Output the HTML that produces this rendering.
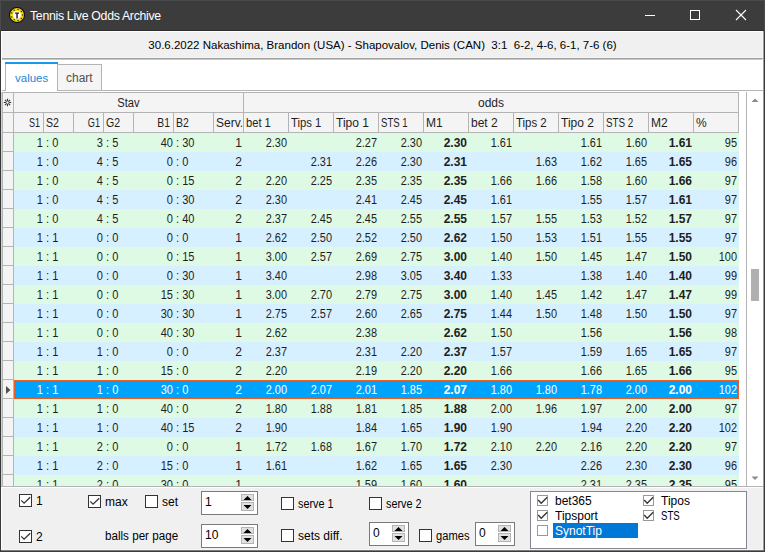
<!DOCTYPE html><html><head><meta charset="utf-8"><style>
*{margin:0;padding:0;box-sizing:border-box}
html,body{width:765px;height:552px;overflow:hidden;background:#f0f0f0;font-family:"Liberation Sans",sans-serif;font-size:12px;color:#000}
.ab{position:absolute}
.t{position:absolute;white-space:pre;line-height:21px;height:21px}
.r{text-align:right}
.c{text-align:center}
.b{font-weight:bold}
.cb{position:absolute;width:13px;height:13px;border:1px solid #333;background:#fff}
.cb2{position:absolute;width:11px;height:11px;border:1px solid #999;background:#fff}
.ln{position:absolute;background:#b4b4b4}
</style></head><body>
<div class="ab" style="left:0;top:0;width:765px;height:30px;background:#3c3c3c"></div>
<div class="ab" style="left:0;top:30px;width:765px;height:1px;background:#2c2c2c"></div>
<svg class="ab" style="left:8px;top:6px" width="18" height="18" viewBox="0 0 18 18">
<circle cx="9" cy="9" r="8" fill="#0d0d0d"/>
<circle cx="9" cy="9" r="7" fill="#e8c800"/>
<circle cx="9" cy="9" r="6.2" fill="#f5dc10"/>
<circle cx="14.60" cy="9.00" r="0.75" fill="#3a3000"/><circle cx="13.29" cy="12.60" r="0.75" fill="#3a3000"/><circle cx="9.97" cy="14.51" r="0.75" fill="#3a3000"/><circle cx="6.20" cy="13.85" r="0.75" fill="#3a3000"/><circle cx="3.74" cy="10.92" r="0.75" fill="#3a3000"/><circle cx="3.74" cy="7.08" r="0.75" fill="#3a3000"/><circle cx="6.20" cy="4.15" r="0.75" fill="#3a3000"/><circle cx="9.97" cy="3.49" r="0.75" fill="#3a3000"/><circle cx="13.29" cy="5.40" r="0.75" fill="#3a3000"/>
<circle cx="9" cy="9" r="3.9" fill="#fff"/>
<path d="M7 6.4h4v1.4h-1.2v4.7h-1.5v-4.7h-1.3z" fill="#222"/>
</svg>
<div class="t" style="left:30px;top:6px;color:#fff;font-size:12.3px;letter-spacing:-0.3px">Tennis Live Odds Archive</div>
<div class="ab" style="left:645px;top:15px;width:10px;height:1px;background:#fff"></div>
<div class="ab" style="left:690px;top:10px;width:10px;height:10px;border:1px solid #fff"></div>
<svg class="ab" style="left:735px;top:9px" width="12" height="12" viewBox="0 0 12 12"><path d="M1 1L11 11M11 1L1 11" stroke="#fff" stroke-width="1.1"/></svg>
<div class="ab" style="left:0;top:0;width:1px;height:552px;background:#383838"></div>
<div class="ab" style="left:764px;top:0;width:1px;height:552px;background:#3c3c3c"></div>
<div class="ab" style="left:0;top:0;width:765px;height:1px;background:#4b4b4b"></div>
<div class="ab" style="left:0;top:0;width:1px;height:31px;background:#4b4b4b"></div>
<div class="ab" style="left:764px;top:0;width:1px;height:31px;background:#4b4b4b"></div>
<div class="ab" style="left:2px;top:549px;width:760px;height:1px;background:#f6f6f6"></div>
<div class="ab" style="left:763px;top:31px;width:1px;height:521px;background:#9a9a9a"></div>
<div class="ab" style="left:0;top:551px;width:765px;height:1px;background:#3c3c3c"></div>
<div class="ab" style="left:1px;top:550px;width:763px;height:1px;background:#7a7a7a"></div>
<div class="ab" style="left:1px;top:31px;width:762px;height:1px;background:#fff"></div>
<div class="ab" style="left:1px;top:31px;width:1px;height:519px;background:#fff"></div>
<div class="ab" style="left:762px;top:31px;width:1px;height:519px;background:#f8f8f8"></div>
<div class="ab" style="left:2px;top:57px;width:760px;height:1px;background:#f6f6f6"></div>
<div class="ab" style="left:2px;top:58px;width:762px;height:1px;background:#a0a0a0"></div>
<div class="t c" style="left:2px;top:35px;width:761px;color:#000;font-size:11.5px">30.6.2022 Nakashima, Brandon (USA) - Shapovalov, Denis (CAN)  3:1  6-2, 4-6, 6-1, 7-6 (6)</div>
<div class="ab" style="left:2px;top:59px;width:761px;height:428px;background:#fff"></div>
<div class="ab" style="left:2px;top:59px;width:760px;height:1px;background:#c8c8c8"></div>
<div class="ln" style="left:2px;top:90px;width:4px;height:1px"></div>
<div class="ln" style="left:101px;top:90px;width:662px;height:1px"></div>
<div class="ab" style="left:5px;top:62px;width:53px;height:2px;background:#1a98f0"></div>
<div class="ln" style="left:5px;top:64px;width:1px;height:27px"></div>
<div class="t" style="left:15px;top:68px;color:#1a86d6;font-size:11.5px">values</div>
<div class="ab" style="left:57px;top:64px;width:45px;height:27px;border:1px solid #b4b4b4;background:#f5f5f5"></div>
<div class="t" style="left:66px;top:68px;color:#505050">chart</div>
<div class="ab" style="left:2px;top:92px;width:12px;height:21px;background:#b4b4b4"></div>
<div class="ab" style="left:3px;top:93px;width:10px;height:19px;background:#f4f4f4"></div>
<div class="ab" style="left:2px;top:112px;width:12px;height:21px;background:#b4b4b4"></div>
<div class="ab" style="left:3px;top:113px;width:10px;height:19px;background:#f4f4f4"></div>
<svg class="ab" style="left:3px;top:98px" width="9" height="9" viewBox="0 0 9 9"><g stroke="#333" stroke-width="1.1"><path d="M4.5 0.8V8.2M0.8 4.5H8.2M1.9 1.9L7.1 7.1M7.1 1.9L1.9 7.1"/></g><circle cx="4.5" cy="4.5" r="1.2" fill="#f4f4f4"/></svg>
<div class="ab" style="left:13px;top:92px;width:231px;height:21px;background:#b4b4b4"></div>
<div class="ab" style="left:14px;top:93px;width:229px;height:19px;background:#f4f4f4"></div>
<div class="ab" style="left:243px;top:92px;width:496px;height:21px;background:#b4b4b4"></div>
<div class="ab" style="left:244px;top:93px;width:494px;height:19px;background:#f4f4f4"></div>
<div class="t c" style="left:14px;top:93px;width:229px;color:#1e1e1e;transform:scaleX(0.93)">Stav</div>
<div class="t c" style="left:244px;top:93px;width:494px;color:#1e1e1e">odds</div>
<div class="ab" style="left:13px;top:112px;width:31px;height:21px;background:#b4b4b4"></div>
<div class="ab" style="left:14px;top:113px;width:29px;height:19px;background:#f4f4f4"></div>
<div class="ab" style="left:43px;top:112px;width:31px;height:21px;background:#b4b4b4"></div>
<div class="ab" style="left:44px;top:113px;width:29px;height:19px;background:#f4f4f4"></div>
<div class="ab" style="left:73px;top:112px;width:31px;height:21px;background:#b4b4b4"></div>
<div class="ab" style="left:74px;top:113px;width:29px;height:19px;background:#f4f4f4"></div>
<div class="ab" style="left:103px;top:112px;width:31px;height:21px;background:#b4b4b4"></div>
<div class="ab" style="left:104px;top:113px;width:29px;height:19px;background:#f4f4f4"></div>
<div class="ab" style="left:133px;top:112px;width:41px;height:21px;background:#b4b4b4"></div>
<div class="ab" style="left:134px;top:113px;width:39px;height:19px;background:#f4f4f4"></div>
<div class="ab" style="left:173px;top:112px;width:41px;height:21px;background:#b4b4b4"></div>
<div class="ab" style="left:174px;top:113px;width:39px;height:19px;background:#f4f4f4"></div>
<div class="ab" style="left:213px;top:112px;width:31px;height:21px;background:#b4b4b4"></div>
<div class="ab" style="left:214px;top:113px;width:29px;height:19px;background:#f4f4f4"></div>
<div class="ab" style="left:243px;top:112px;width:46px;height:21px;background:#b4b4b4"></div>
<div class="ab" style="left:244px;top:113px;width:44px;height:19px;background:#f4f4f4"></div>
<div class="ab" style="left:288px;top:112px;width:46px;height:21px;background:#b4b4b4"></div>
<div class="ab" style="left:289px;top:113px;width:44px;height:19px;background:#f4f4f4"></div>
<div class="ab" style="left:333px;top:112px;width:46px;height:21px;background:#b4b4b4"></div>
<div class="ab" style="left:334px;top:113px;width:44px;height:19px;background:#f4f4f4"></div>
<div class="ab" style="left:378px;top:112px;width:46px;height:21px;background:#b4b4b4"></div>
<div class="ab" style="left:379px;top:113px;width:44px;height:19px;background:#f4f4f4"></div>
<div class="ab" style="left:423px;top:112px;width:46px;height:21px;background:#b4b4b4"></div>
<div class="ab" style="left:424px;top:113px;width:44px;height:19px;background:#f4f4f4"></div>
<div class="ab" style="left:468px;top:112px;width:46px;height:21px;background:#b4b4b4"></div>
<div class="ab" style="left:469px;top:113px;width:44px;height:19px;background:#f4f4f4"></div>
<div class="ab" style="left:513px;top:112px;width:46px;height:21px;background:#b4b4b4"></div>
<div class="ab" style="left:514px;top:113px;width:44px;height:19px;background:#f4f4f4"></div>
<div class="ab" style="left:558px;top:112px;width:46px;height:21px;background:#b4b4b4"></div>
<div class="ab" style="left:559px;top:113px;width:44px;height:19px;background:#f4f4f4"></div>
<div class="ab" style="left:603px;top:112px;width:46px;height:21px;background:#b4b4b4"></div>
<div class="ab" style="left:604px;top:113px;width:44px;height:19px;background:#f4f4f4"></div>
<div class="ab" style="left:648px;top:112px;width:46px;height:21px;background:#b4b4b4"></div>
<div class="ab" style="left:649px;top:113px;width:44px;height:19px;background:#f4f4f4"></div>
<div class="ab" style="left:693px;top:112px;width:46px;height:21px;background:#b4b4b4"></div>
<div class="ab" style="left:694px;top:113px;width:44px;height:19px;background:#f4f4f4"></div>
<div class="t r" style="left:13px;top:113px;width:27px;color:#1e1e1e;transform:scaleX(0.75);transform-origin:right">S1</div>
<div class="t" style="left:46px;top:113px;color:#1e1e1e;transform:scaleX(0.88);transform-origin:left">S2</div>
<div class="t r" style="left:73px;top:113px;width:27px;color:#1e1e1e;transform:scaleX(0.76);transform-origin:right">G1</div>
<div class="t" style="left:106px;top:113px;color:#1e1e1e;transform:scaleX(0.88);transform-origin:left">G2</div>
<div class="t r" style="left:133px;top:113px;width:37px;color:#1e1e1e;transform:scaleX(0.86);transform-origin:right">B1</div>
<div class="t" style="left:176px;top:113px;color:#1e1e1e;transform:scaleX(0.87);transform-origin:left">B2</div>
<div class="t" style="left:216px;top:113px;color:#1e1e1e">Serv.</div>
<div class="t" style="left:246px;top:113px;color:#1e1e1e;transform:scaleX(0.93);transform-origin:left">bet 1</div>
<div class="t" style="left:291px;top:113px;color:#1e1e1e;transform:scaleX(0.94);transform-origin:left">Tips 1</div>
<div class="t" style="left:336px;top:113px;color:#1e1e1e">Tipo 1</div>
<div class="t" style="left:381px;top:113px;color:#1e1e1e;transform:scaleX(0.8);transform-origin:left">STS 1</div>
<div class="t" style="left:426px;top:113px;color:#1e1e1e">M1</div>
<div class="t" style="left:471px;top:113px;color:#1e1e1e">bet 2</div>
<div class="t" style="left:516px;top:113px;color:#1e1e1e;transform:scaleX(0.95);transform-origin:left">Tips 2</div>
<div class="t" style="left:561px;top:113px;color:#1e1e1e">Tipo 2</div>
<div class="t" style="left:606px;top:113px;color:#1e1e1e;transform:scaleX(0.82);transform-origin:left">STS 2</div>
<div class="t" style="left:651px;top:113px;color:#1e1e1e">M2</div>
<div class="t" style="left:696px;top:113px;color:#1e1e1e">%</div>
<div class="ab" style="left:14px;top:133px;width:725px;height:19px;background:#def9e4"></div>
<div class="ab" style="left:2px;top:132px;width:12px;height:20px;background:#b4b4b4"></div>
<div class="ab" style="left:3px;top:133px;width:10px;height:18px;background:#f4f4f4"></div>
<div class="ab" style="left:14px;top:152px;width:725px;height:19px;background:#d7f0ff"></div>
<div class="ab" style="left:2px;top:151px;width:12px;height:20px;background:#b4b4b4"></div>
<div class="ab" style="left:3px;top:152px;width:10px;height:18px;background:#f4f4f4"></div>
<div class="ab" style="left:14px;top:171px;width:725px;height:19px;background:#def9e4"></div>
<div class="ab" style="left:2px;top:170px;width:12px;height:20px;background:#b4b4b4"></div>
<div class="ab" style="left:3px;top:171px;width:10px;height:18px;background:#f4f4f4"></div>
<div class="ab" style="left:14px;top:190px;width:725px;height:19px;background:#d7f0ff"></div>
<div class="ab" style="left:2px;top:189px;width:12px;height:20px;background:#b4b4b4"></div>
<div class="ab" style="left:3px;top:190px;width:10px;height:18px;background:#f4f4f4"></div>
<div class="ab" style="left:14px;top:209px;width:725px;height:19px;background:#def9e4"></div>
<div class="ab" style="left:2px;top:208px;width:12px;height:20px;background:#b4b4b4"></div>
<div class="ab" style="left:3px;top:209px;width:10px;height:18px;background:#f4f4f4"></div>
<div class="ab" style="left:14px;top:228px;width:725px;height:19px;background:#d7f0ff"></div>
<div class="ab" style="left:2px;top:227px;width:12px;height:20px;background:#b4b4b4"></div>
<div class="ab" style="left:3px;top:228px;width:10px;height:18px;background:#f4f4f4"></div>
<div class="ab" style="left:14px;top:247px;width:725px;height:19px;background:#def9e4"></div>
<div class="ab" style="left:2px;top:246px;width:12px;height:20px;background:#b4b4b4"></div>
<div class="ab" style="left:3px;top:247px;width:10px;height:18px;background:#f4f4f4"></div>
<div class="ab" style="left:14px;top:266px;width:725px;height:19px;background:#d7f0ff"></div>
<div class="ab" style="left:2px;top:265px;width:12px;height:20px;background:#b4b4b4"></div>
<div class="ab" style="left:3px;top:266px;width:10px;height:18px;background:#f4f4f4"></div>
<div class="ab" style="left:14px;top:285px;width:725px;height:19px;background:#def9e4"></div>
<div class="ab" style="left:2px;top:284px;width:12px;height:20px;background:#b4b4b4"></div>
<div class="ab" style="left:3px;top:285px;width:10px;height:18px;background:#f4f4f4"></div>
<div class="ab" style="left:14px;top:304px;width:725px;height:19px;background:#d7f0ff"></div>
<div class="ab" style="left:2px;top:303px;width:12px;height:20px;background:#b4b4b4"></div>
<div class="ab" style="left:3px;top:304px;width:10px;height:18px;background:#f4f4f4"></div>
<div class="ab" style="left:14px;top:323px;width:725px;height:19px;background:#def9e4"></div>
<div class="ab" style="left:2px;top:322px;width:12px;height:20px;background:#b4b4b4"></div>
<div class="ab" style="left:3px;top:323px;width:10px;height:18px;background:#f4f4f4"></div>
<div class="ab" style="left:14px;top:342px;width:725px;height:19px;background:#d7f0ff"></div>
<div class="ab" style="left:2px;top:341px;width:12px;height:20px;background:#b4b4b4"></div>
<div class="ab" style="left:3px;top:342px;width:10px;height:18px;background:#f4f4f4"></div>
<div class="ab" style="left:14px;top:361px;width:725px;height:19px;background:#def9e4"></div>
<div class="ab" style="left:2px;top:360px;width:12px;height:20px;background:#b4b4b4"></div>
<div class="ab" style="left:3px;top:361px;width:10px;height:18px;background:#f4f4f4"></div>
<div class="ab" style="left:14px;top:380px;width:725px;height:19px;background:#00a3fc"></div>
<div class="ab" style="left:2px;top:379px;width:12px;height:20px;background:#b4b4b4"></div>
<div class="ab" style="left:3px;top:380px;width:10px;height:18px;background:#f4f4f4"></div>
<div class="ab" style="left:14px;top:399px;width:725px;height:19px;background:#def9e4"></div>
<div class="ab" style="left:2px;top:398px;width:12px;height:20px;background:#b4b4b4"></div>
<div class="ab" style="left:3px;top:399px;width:10px;height:18px;background:#f4f4f4"></div>
<div class="ab" style="left:14px;top:418px;width:725px;height:19px;background:#d7f0ff"></div>
<div class="ab" style="left:2px;top:417px;width:12px;height:20px;background:#b4b4b4"></div>
<div class="ab" style="left:3px;top:418px;width:10px;height:18px;background:#f4f4f4"></div>
<div class="ab" style="left:14px;top:437px;width:725px;height:19px;background:#def9e4"></div>
<div class="ab" style="left:2px;top:436px;width:12px;height:20px;background:#b4b4b4"></div>
<div class="ab" style="left:3px;top:437px;width:10px;height:18px;background:#f4f4f4"></div>
<div class="ab" style="left:14px;top:456px;width:725px;height:19px;background:#d7f0ff"></div>
<div class="ab" style="left:2px;top:455px;width:12px;height:20px;background:#b4b4b4"></div>
<div class="ab" style="left:3px;top:456px;width:10px;height:18px;background:#f4f4f4"></div>
<div class="ab" style="left:14px;top:475px;width:725px;height:11px;background:#def9e4"></div>
<div class="ab" style="left:2px;top:474px;width:12px;height:12px;background:#b4b4b4"></div>
<div class="ab" style="left:3px;top:475px;width:10px;height:11px;background:#f4f4f4"></div>
<div id="clip" class="ab" style="left:0;top:133px;width:765px;height:353px;overflow:hidden">
<div class="t r" style="left:-14px;top:0px;width:60px;color:#1e1e1e;transform:scaleX(0.92);transform-origin:right">1 </div>
<div class="t" style="left:46px;top:0px;color:#1e1e1e;transform:scaleX(0.92);transform-origin:left">: 0</div>
<div class="t r" style="left:46px;top:0px;width:60px;color:#1e1e1e;transform:scaleX(0.92);transform-origin:right">3 </div>
<div class="t" style="left:106px;top:0px;color:#1e1e1e;transform:scaleX(0.92);transform-origin:left">: 5</div>
<div class="t r" style="left:116px;top:0px;width:60px;color:#1e1e1e;transform:scaleX(0.92);transform-origin:right">40 </div>
<div class="t" style="left:176px;top:0px;color:#1e1e1e;transform:scaleX(0.92);transform-origin:left">: 30</div>
<div class="t r" style="left:213px;top:0px;width:29px;color:#1e1e1e">1</div>
<div class="t r" style="left:243px;top:0px;width:44px;color:#1e1e1e;transform:scaleX(0.91);transform-origin:right">2.30</div>
<div class="t r" style="left:333px;top:0px;width:44px;color:#1e1e1e;transform:scaleX(0.91);transform-origin:right">2.27</div>
<div class="t r" style="left:378px;top:0px;width:44px;color:#1e1e1e;transform:scaleX(0.91);transform-origin:right">2.30</div>
<div class="t r b" style="left:423px;top:0px;width:44px;color:#1e1e1e">2.30</div>
<div class="t r" style="left:468px;top:0px;width:44px;color:#1e1e1e;transform:scaleX(0.91);transform-origin:right">1.61</div>
<div class="t r" style="left:558px;top:0px;width:44px;color:#1e1e1e;transform:scaleX(0.91);transform-origin:right">1.61</div>
<div class="t r" style="left:603px;top:0px;width:44px;color:#1e1e1e;transform:scaleX(0.91);transform-origin:right">1.60</div>
<div class="t r b" style="left:648px;top:0px;width:44px;color:#1e1e1e">1.61</div>
<div class="t r" style="left:693px;top:0px;width:44px;color:#1e1e1e;transform:scaleX(0.91);transform-origin:right">95</div>
<div class="t r" style="left:-14px;top:19px;width:60px;color:#1e1e1e;transform:scaleX(0.92);transform-origin:right">1 </div>
<div class="t" style="left:46px;top:19px;color:#1e1e1e;transform:scaleX(0.92);transform-origin:left">: 0</div>
<div class="t r" style="left:46px;top:19px;width:60px;color:#1e1e1e;transform:scaleX(0.92);transform-origin:right">4 </div>
<div class="t" style="left:106px;top:19px;color:#1e1e1e;transform:scaleX(0.92);transform-origin:left">: 5</div>
<div class="t r" style="left:116px;top:19px;width:60px;color:#1e1e1e;transform:scaleX(0.92);transform-origin:right">0 </div>
<div class="t" style="left:176px;top:19px;color:#1e1e1e;transform:scaleX(0.92);transform-origin:left">: 0</div>
<div class="t r" style="left:213px;top:19px;width:29px;color:#1e1e1e">2</div>
<div class="t r" style="left:288px;top:19px;width:44px;color:#1e1e1e;transform:scaleX(0.91);transform-origin:right">2.31</div>
<div class="t r" style="left:333px;top:19px;width:44px;color:#1e1e1e;transform:scaleX(0.91);transform-origin:right">2.26</div>
<div class="t r" style="left:378px;top:19px;width:44px;color:#1e1e1e;transform:scaleX(0.91);transform-origin:right">2.30</div>
<div class="t r b" style="left:423px;top:19px;width:44px;color:#1e1e1e">2.31</div>
<div class="t r" style="left:513px;top:19px;width:44px;color:#1e1e1e;transform:scaleX(0.91);transform-origin:right">1.63</div>
<div class="t r" style="left:558px;top:19px;width:44px;color:#1e1e1e;transform:scaleX(0.91);transform-origin:right">1.62</div>
<div class="t r" style="left:603px;top:19px;width:44px;color:#1e1e1e;transform:scaleX(0.91);transform-origin:right">1.65</div>
<div class="t r b" style="left:648px;top:19px;width:44px;color:#1e1e1e">1.65</div>
<div class="t r" style="left:693px;top:19px;width:44px;color:#1e1e1e;transform:scaleX(0.91);transform-origin:right">96</div>
<div class="t r" style="left:-14px;top:38px;width:60px;color:#1e1e1e;transform:scaleX(0.92);transform-origin:right">1 </div>
<div class="t" style="left:46px;top:38px;color:#1e1e1e;transform:scaleX(0.92);transform-origin:left">: 0</div>
<div class="t r" style="left:46px;top:38px;width:60px;color:#1e1e1e;transform:scaleX(0.92);transform-origin:right">4 </div>
<div class="t" style="left:106px;top:38px;color:#1e1e1e;transform:scaleX(0.92);transform-origin:left">: 5</div>
<div class="t r" style="left:116px;top:38px;width:60px;color:#1e1e1e;transform:scaleX(0.92);transform-origin:right">0 </div>
<div class="t" style="left:176px;top:38px;color:#1e1e1e;transform:scaleX(0.92);transform-origin:left">: 15</div>
<div class="t r" style="left:213px;top:38px;width:29px;color:#1e1e1e">2</div>
<div class="t r" style="left:243px;top:38px;width:44px;color:#1e1e1e;transform:scaleX(0.91);transform-origin:right">2.20</div>
<div class="t r" style="left:288px;top:38px;width:44px;color:#1e1e1e;transform:scaleX(0.91);transform-origin:right">2.25</div>
<div class="t r" style="left:333px;top:38px;width:44px;color:#1e1e1e;transform:scaleX(0.91);transform-origin:right">2.35</div>
<div class="t r" style="left:378px;top:38px;width:44px;color:#1e1e1e;transform:scaleX(0.91);transform-origin:right">2.35</div>
<div class="t r b" style="left:423px;top:38px;width:44px;color:#1e1e1e">2.35</div>
<div class="t r" style="left:468px;top:38px;width:44px;color:#1e1e1e;transform:scaleX(0.91);transform-origin:right">1.66</div>
<div class="t r" style="left:513px;top:38px;width:44px;color:#1e1e1e;transform:scaleX(0.91);transform-origin:right">1.66</div>
<div class="t r" style="left:558px;top:38px;width:44px;color:#1e1e1e;transform:scaleX(0.91);transform-origin:right">1.58</div>
<div class="t r" style="left:603px;top:38px;width:44px;color:#1e1e1e;transform:scaleX(0.91);transform-origin:right">1.60</div>
<div class="t r b" style="left:648px;top:38px;width:44px;color:#1e1e1e">1.66</div>
<div class="t r" style="left:693px;top:38px;width:44px;color:#1e1e1e;transform:scaleX(0.91);transform-origin:right">97</div>
<div class="t r" style="left:-14px;top:57px;width:60px;color:#1e1e1e;transform:scaleX(0.92);transform-origin:right">1 </div>
<div class="t" style="left:46px;top:57px;color:#1e1e1e;transform:scaleX(0.92);transform-origin:left">: 0</div>
<div class="t r" style="left:46px;top:57px;width:60px;color:#1e1e1e;transform:scaleX(0.92);transform-origin:right">4 </div>
<div class="t" style="left:106px;top:57px;color:#1e1e1e;transform:scaleX(0.92);transform-origin:left">: 5</div>
<div class="t r" style="left:116px;top:57px;width:60px;color:#1e1e1e;transform:scaleX(0.92);transform-origin:right">0 </div>
<div class="t" style="left:176px;top:57px;color:#1e1e1e;transform:scaleX(0.92);transform-origin:left">: 30</div>
<div class="t r" style="left:213px;top:57px;width:29px;color:#1e1e1e">2</div>
<div class="t r" style="left:243px;top:57px;width:44px;color:#1e1e1e;transform:scaleX(0.91);transform-origin:right">2.30</div>
<div class="t r" style="left:333px;top:57px;width:44px;color:#1e1e1e;transform:scaleX(0.91);transform-origin:right">2.41</div>
<div class="t r" style="left:378px;top:57px;width:44px;color:#1e1e1e;transform:scaleX(0.91);transform-origin:right">2.45</div>
<div class="t r b" style="left:423px;top:57px;width:44px;color:#1e1e1e">2.45</div>
<div class="t r" style="left:468px;top:57px;width:44px;color:#1e1e1e;transform:scaleX(0.91);transform-origin:right">1.61</div>
<div class="t r" style="left:558px;top:57px;width:44px;color:#1e1e1e;transform:scaleX(0.91);transform-origin:right">1.55</div>
<div class="t r" style="left:603px;top:57px;width:44px;color:#1e1e1e;transform:scaleX(0.91);transform-origin:right">1.57</div>
<div class="t r b" style="left:648px;top:57px;width:44px;color:#1e1e1e">1.61</div>
<div class="t r" style="left:693px;top:57px;width:44px;color:#1e1e1e;transform:scaleX(0.91);transform-origin:right">97</div>
<div class="t r" style="left:-14px;top:76px;width:60px;color:#1e1e1e;transform:scaleX(0.92);transform-origin:right">1 </div>
<div class="t" style="left:46px;top:76px;color:#1e1e1e;transform:scaleX(0.92);transform-origin:left">: 0</div>
<div class="t r" style="left:46px;top:76px;width:60px;color:#1e1e1e;transform:scaleX(0.92);transform-origin:right">4 </div>
<div class="t" style="left:106px;top:76px;color:#1e1e1e;transform:scaleX(0.92);transform-origin:left">: 5</div>
<div class="t r" style="left:116px;top:76px;width:60px;color:#1e1e1e;transform:scaleX(0.92);transform-origin:right">0 </div>
<div class="t" style="left:176px;top:76px;color:#1e1e1e;transform:scaleX(0.92);transform-origin:left">: 40</div>
<div class="t r" style="left:213px;top:76px;width:29px;color:#1e1e1e">2</div>
<div class="t r" style="left:243px;top:76px;width:44px;color:#1e1e1e;transform:scaleX(0.91);transform-origin:right">2.37</div>
<div class="t r" style="left:288px;top:76px;width:44px;color:#1e1e1e;transform:scaleX(0.91);transform-origin:right">2.45</div>
<div class="t r" style="left:333px;top:76px;width:44px;color:#1e1e1e;transform:scaleX(0.91);transform-origin:right">2.45</div>
<div class="t r" style="left:378px;top:76px;width:44px;color:#1e1e1e;transform:scaleX(0.91);transform-origin:right">2.55</div>
<div class="t r b" style="left:423px;top:76px;width:44px;color:#1e1e1e">2.55</div>
<div class="t r" style="left:468px;top:76px;width:44px;color:#1e1e1e;transform:scaleX(0.91);transform-origin:right">1.57</div>
<div class="t r" style="left:513px;top:76px;width:44px;color:#1e1e1e;transform:scaleX(0.91);transform-origin:right">1.55</div>
<div class="t r" style="left:558px;top:76px;width:44px;color:#1e1e1e;transform:scaleX(0.91);transform-origin:right">1.53</div>
<div class="t r" style="left:603px;top:76px;width:44px;color:#1e1e1e;transform:scaleX(0.91);transform-origin:right">1.52</div>
<div class="t r b" style="left:648px;top:76px;width:44px;color:#1e1e1e">1.57</div>
<div class="t r" style="left:693px;top:76px;width:44px;color:#1e1e1e;transform:scaleX(0.91);transform-origin:right">97</div>
<div class="t r" style="left:-14px;top:95px;width:60px;color:#1e1e1e;transform:scaleX(0.92);transform-origin:right">1 </div>
<div class="t" style="left:46px;top:95px;color:#1e1e1e;transform:scaleX(0.92);transform-origin:left">: 1</div>
<div class="t r" style="left:46px;top:95px;width:60px;color:#1e1e1e;transform:scaleX(0.92);transform-origin:right">0 </div>
<div class="t" style="left:106px;top:95px;color:#1e1e1e;transform:scaleX(0.92);transform-origin:left">: 0</div>
<div class="t r" style="left:116px;top:95px;width:60px;color:#1e1e1e;transform:scaleX(0.92);transform-origin:right">0 </div>
<div class="t" style="left:176px;top:95px;color:#1e1e1e;transform:scaleX(0.92);transform-origin:left">: 0</div>
<div class="t r" style="left:213px;top:95px;width:29px;color:#1e1e1e">1</div>
<div class="t r" style="left:243px;top:95px;width:44px;color:#1e1e1e;transform:scaleX(0.91);transform-origin:right">2.62</div>
<div class="t r" style="left:288px;top:95px;width:44px;color:#1e1e1e;transform:scaleX(0.91);transform-origin:right">2.50</div>
<div class="t r" style="left:333px;top:95px;width:44px;color:#1e1e1e;transform:scaleX(0.91);transform-origin:right">2.52</div>
<div class="t r" style="left:378px;top:95px;width:44px;color:#1e1e1e;transform:scaleX(0.91);transform-origin:right">2.50</div>
<div class="t r b" style="left:423px;top:95px;width:44px;color:#1e1e1e">2.62</div>
<div class="t r" style="left:468px;top:95px;width:44px;color:#1e1e1e;transform:scaleX(0.91);transform-origin:right">1.50</div>
<div class="t r" style="left:513px;top:95px;width:44px;color:#1e1e1e;transform:scaleX(0.91);transform-origin:right">1.53</div>
<div class="t r" style="left:558px;top:95px;width:44px;color:#1e1e1e;transform:scaleX(0.91);transform-origin:right">1.51</div>
<div class="t r" style="left:603px;top:95px;width:44px;color:#1e1e1e;transform:scaleX(0.91);transform-origin:right">1.55</div>
<div class="t r b" style="left:648px;top:95px;width:44px;color:#1e1e1e">1.55</div>
<div class="t r" style="left:693px;top:95px;width:44px;color:#1e1e1e;transform:scaleX(0.91);transform-origin:right">97</div>
<div class="t r" style="left:-14px;top:114px;width:60px;color:#1e1e1e;transform:scaleX(0.92);transform-origin:right">1 </div>
<div class="t" style="left:46px;top:114px;color:#1e1e1e;transform:scaleX(0.92);transform-origin:left">: 1</div>
<div class="t r" style="left:46px;top:114px;width:60px;color:#1e1e1e;transform:scaleX(0.92);transform-origin:right">0 </div>
<div class="t" style="left:106px;top:114px;color:#1e1e1e;transform:scaleX(0.92);transform-origin:left">: 0</div>
<div class="t r" style="left:116px;top:114px;width:60px;color:#1e1e1e;transform:scaleX(0.92);transform-origin:right">0 </div>
<div class="t" style="left:176px;top:114px;color:#1e1e1e;transform:scaleX(0.92);transform-origin:left">: 15</div>
<div class="t r" style="left:213px;top:114px;width:29px;color:#1e1e1e">1</div>
<div class="t r" style="left:243px;top:114px;width:44px;color:#1e1e1e;transform:scaleX(0.91);transform-origin:right">3.00</div>
<div class="t r" style="left:288px;top:114px;width:44px;color:#1e1e1e;transform:scaleX(0.91);transform-origin:right">2.57</div>
<div class="t r" style="left:333px;top:114px;width:44px;color:#1e1e1e;transform:scaleX(0.91);transform-origin:right">2.69</div>
<div class="t r" style="left:378px;top:114px;width:44px;color:#1e1e1e;transform:scaleX(0.91);transform-origin:right">2.75</div>
<div class="t r b" style="left:423px;top:114px;width:44px;color:#1e1e1e">3.00</div>
<div class="t r" style="left:468px;top:114px;width:44px;color:#1e1e1e;transform:scaleX(0.91);transform-origin:right">1.40</div>
<div class="t r" style="left:513px;top:114px;width:44px;color:#1e1e1e;transform:scaleX(0.91);transform-origin:right">1.50</div>
<div class="t r" style="left:558px;top:114px;width:44px;color:#1e1e1e;transform:scaleX(0.91);transform-origin:right">1.45</div>
<div class="t r" style="left:603px;top:114px;width:44px;color:#1e1e1e;transform:scaleX(0.91);transform-origin:right">1.47</div>
<div class="t r b" style="left:648px;top:114px;width:44px;color:#1e1e1e">1.50</div>
<div class="t r" style="left:693px;top:114px;width:44px;color:#1e1e1e;transform:scaleX(0.91);transform-origin:right">100</div>
<div class="t r" style="left:-14px;top:133px;width:60px;color:#1e1e1e;transform:scaleX(0.92);transform-origin:right">1 </div>
<div class="t" style="left:46px;top:133px;color:#1e1e1e;transform:scaleX(0.92);transform-origin:left">: 1</div>
<div class="t r" style="left:46px;top:133px;width:60px;color:#1e1e1e;transform:scaleX(0.92);transform-origin:right">0 </div>
<div class="t" style="left:106px;top:133px;color:#1e1e1e;transform:scaleX(0.92);transform-origin:left">: 0</div>
<div class="t r" style="left:116px;top:133px;width:60px;color:#1e1e1e;transform:scaleX(0.92);transform-origin:right">0 </div>
<div class="t" style="left:176px;top:133px;color:#1e1e1e;transform:scaleX(0.92);transform-origin:left">: 30</div>
<div class="t r" style="left:213px;top:133px;width:29px;color:#1e1e1e">1</div>
<div class="t r" style="left:243px;top:133px;width:44px;color:#1e1e1e;transform:scaleX(0.91);transform-origin:right">3.40</div>
<div class="t r" style="left:333px;top:133px;width:44px;color:#1e1e1e;transform:scaleX(0.91);transform-origin:right">2.98</div>
<div class="t r" style="left:378px;top:133px;width:44px;color:#1e1e1e;transform:scaleX(0.91);transform-origin:right">3.05</div>
<div class="t r b" style="left:423px;top:133px;width:44px;color:#1e1e1e">3.40</div>
<div class="t r" style="left:468px;top:133px;width:44px;color:#1e1e1e;transform:scaleX(0.91);transform-origin:right">1.33</div>
<div class="t r" style="left:558px;top:133px;width:44px;color:#1e1e1e;transform:scaleX(0.91);transform-origin:right">1.38</div>
<div class="t r" style="left:603px;top:133px;width:44px;color:#1e1e1e;transform:scaleX(0.91);transform-origin:right">1.40</div>
<div class="t r b" style="left:648px;top:133px;width:44px;color:#1e1e1e">1.40</div>
<div class="t r" style="left:693px;top:133px;width:44px;color:#1e1e1e;transform:scaleX(0.91);transform-origin:right">99</div>
<div class="t r" style="left:-14px;top:152px;width:60px;color:#1e1e1e;transform:scaleX(0.92);transform-origin:right">1 </div>
<div class="t" style="left:46px;top:152px;color:#1e1e1e;transform:scaleX(0.92);transform-origin:left">: 1</div>
<div class="t r" style="left:46px;top:152px;width:60px;color:#1e1e1e;transform:scaleX(0.92);transform-origin:right">0 </div>
<div class="t" style="left:106px;top:152px;color:#1e1e1e;transform:scaleX(0.92);transform-origin:left">: 0</div>
<div class="t r" style="left:116px;top:152px;width:60px;color:#1e1e1e;transform:scaleX(0.92);transform-origin:right">15 </div>
<div class="t" style="left:176px;top:152px;color:#1e1e1e;transform:scaleX(0.92);transform-origin:left">: 30</div>
<div class="t r" style="left:213px;top:152px;width:29px;color:#1e1e1e">1</div>
<div class="t r" style="left:243px;top:152px;width:44px;color:#1e1e1e;transform:scaleX(0.91);transform-origin:right">3.00</div>
<div class="t r" style="left:288px;top:152px;width:44px;color:#1e1e1e;transform:scaleX(0.91);transform-origin:right">2.70</div>
<div class="t r" style="left:333px;top:152px;width:44px;color:#1e1e1e;transform:scaleX(0.91);transform-origin:right">2.79</div>
<div class="t r" style="left:378px;top:152px;width:44px;color:#1e1e1e;transform:scaleX(0.91);transform-origin:right">2.75</div>
<div class="t r b" style="left:423px;top:152px;width:44px;color:#1e1e1e">3.00</div>
<div class="t r" style="left:468px;top:152px;width:44px;color:#1e1e1e;transform:scaleX(0.91);transform-origin:right">1.40</div>
<div class="t r" style="left:513px;top:152px;width:44px;color:#1e1e1e;transform:scaleX(0.91);transform-origin:right">1.45</div>
<div class="t r" style="left:558px;top:152px;width:44px;color:#1e1e1e;transform:scaleX(0.91);transform-origin:right">1.42</div>
<div class="t r" style="left:603px;top:152px;width:44px;color:#1e1e1e;transform:scaleX(0.91);transform-origin:right">1.47</div>
<div class="t r b" style="left:648px;top:152px;width:44px;color:#1e1e1e">1.47</div>
<div class="t r" style="left:693px;top:152px;width:44px;color:#1e1e1e;transform:scaleX(0.91);transform-origin:right">99</div>
<div class="t r" style="left:-14px;top:171px;width:60px;color:#1e1e1e;transform:scaleX(0.92);transform-origin:right">1 </div>
<div class="t" style="left:46px;top:171px;color:#1e1e1e;transform:scaleX(0.92);transform-origin:left">: 1</div>
<div class="t r" style="left:46px;top:171px;width:60px;color:#1e1e1e;transform:scaleX(0.92);transform-origin:right">0 </div>
<div class="t" style="left:106px;top:171px;color:#1e1e1e;transform:scaleX(0.92);transform-origin:left">: 0</div>
<div class="t r" style="left:116px;top:171px;width:60px;color:#1e1e1e;transform:scaleX(0.92);transform-origin:right">30 </div>
<div class="t" style="left:176px;top:171px;color:#1e1e1e;transform:scaleX(0.92);transform-origin:left">: 30</div>
<div class="t r" style="left:213px;top:171px;width:29px;color:#1e1e1e">1</div>
<div class="t r" style="left:243px;top:171px;width:44px;color:#1e1e1e;transform:scaleX(0.91);transform-origin:right">2.75</div>
<div class="t r" style="left:288px;top:171px;width:44px;color:#1e1e1e;transform:scaleX(0.91);transform-origin:right">2.57</div>
<div class="t r" style="left:333px;top:171px;width:44px;color:#1e1e1e;transform:scaleX(0.91);transform-origin:right">2.60</div>
<div class="t r" style="left:378px;top:171px;width:44px;color:#1e1e1e;transform:scaleX(0.91);transform-origin:right">2.65</div>
<div class="t r b" style="left:423px;top:171px;width:44px;color:#1e1e1e">2.75</div>
<div class="t r" style="left:468px;top:171px;width:44px;color:#1e1e1e;transform:scaleX(0.91);transform-origin:right">1.44</div>
<div class="t r" style="left:513px;top:171px;width:44px;color:#1e1e1e;transform:scaleX(0.91);transform-origin:right">1.50</div>
<div class="t r" style="left:558px;top:171px;width:44px;color:#1e1e1e;transform:scaleX(0.91);transform-origin:right">1.48</div>
<div class="t r" style="left:603px;top:171px;width:44px;color:#1e1e1e;transform:scaleX(0.91);transform-origin:right">1.50</div>
<div class="t r b" style="left:648px;top:171px;width:44px;color:#1e1e1e">1.50</div>
<div class="t r" style="left:693px;top:171px;width:44px;color:#1e1e1e;transform:scaleX(0.91);transform-origin:right">97</div>
<div class="t r" style="left:-14px;top:190px;width:60px;color:#1e1e1e;transform:scaleX(0.92);transform-origin:right">1 </div>
<div class="t" style="left:46px;top:190px;color:#1e1e1e;transform:scaleX(0.92);transform-origin:left">: 1</div>
<div class="t r" style="left:46px;top:190px;width:60px;color:#1e1e1e;transform:scaleX(0.92);transform-origin:right">0 </div>
<div class="t" style="left:106px;top:190px;color:#1e1e1e;transform:scaleX(0.92);transform-origin:left">: 0</div>
<div class="t r" style="left:116px;top:190px;width:60px;color:#1e1e1e;transform:scaleX(0.92);transform-origin:right">40 </div>
<div class="t" style="left:176px;top:190px;color:#1e1e1e;transform:scaleX(0.92);transform-origin:left">: 30</div>
<div class="t r" style="left:213px;top:190px;width:29px;color:#1e1e1e">1</div>
<div class="t r" style="left:243px;top:190px;width:44px;color:#1e1e1e;transform:scaleX(0.91);transform-origin:right">2.62</div>
<div class="t r" style="left:333px;top:190px;width:44px;color:#1e1e1e;transform:scaleX(0.91);transform-origin:right">2.38</div>
<div class="t r b" style="left:423px;top:190px;width:44px;color:#1e1e1e">2.62</div>
<div class="t r" style="left:468px;top:190px;width:44px;color:#1e1e1e;transform:scaleX(0.91);transform-origin:right">1.50</div>
<div class="t r" style="left:558px;top:190px;width:44px;color:#1e1e1e;transform:scaleX(0.91);transform-origin:right">1.56</div>
<div class="t r b" style="left:648px;top:190px;width:44px;color:#1e1e1e">1.56</div>
<div class="t r" style="left:693px;top:190px;width:44px;color:#1e1e1e;transform:scaleX(0.91);transform-origin:right">98</div>
<div class="t r" style="left:-14px;top:209px;width:60px;color:#1e1e1e;transform:scaleX(0.92);transform-origin:right">1 </div>
<div class="t" style="left:46px;top:209px;color:#1e1e1e;transform:scaleX(0.92);transform-origin:left">: 1</div>
<div class="t r" style="left:46px;top:209px;width:60px;color:#1e1e1e;transform:scaleX(0.92);transform-origin:right">1 </div>
<div class="t" style="left:106px;top:209px;color:#1e1e1e;transform:scaleX(0.92);transform-origin:left">: 0</div>
<div class="t r" style="left:116px;top:209px;width:60px;color:#1e1e1e;transform:scaleX(0.92);transform-origin:right">0 </div>
<div class="t" style="left:176px;top:209px;color:#1e1e1e;transform:scaleX(0.92);transform-origin:left">: 0</div>
<div class="t r" style="left:213px;top:209px;width:29px;color:#1e1e1e">2</div>
<div class="t r" style="left:243px;top:209px;width:44px;color:#1e1e1e;transform:scaleX(0.91);transform-origin:right">2.37</div>
<div class="t r" style="left:333px;top:209px;width:44px;color:#1e1e1e;transform:scaleX(0.91);transform-origin:right">2.31</div>
<div class="t r" style="left:378px;top:209px;width:44px;color:#1e1e1e;transform:scaleX(0.91);transform-origin:right">2.20</div>
<div class="t r b" style="left:423px;top:209px;width:44px;color:#1e1e1e">2.37</div>
<div class="t r" style="left:468px;top:209px;width:44px;color:#1e1e1e;transform:scaleX(0.91);transform-origin:right">1.57</div>
<div class="t r" style="left:558px;top:209px;width:44px;color:#1e1e1e;transform:scaleX(0.91);transform-origin:right">1.59</div>
<div class="t r" style="left:603px;top:209px;width:44px;color:#1e1e1e;transform:scaleX(0.91);transform-origin:right">1.65</div>
<div class="t r b" style="left:648px;top:209px;width:44px;color:#1e1e1e">1.65</div>
<div class="t r" style="left:693px;top:209px;width:44px;color:#1e1e1e;transform:scaleX(0.91);transform-origin:right">97</div>
<div class="t r" style="left:-14px;top:228px;width:60px;color:#1e1e1e;transform:scaleX(0.92);transform-origin:right">1 </div>
<div class="t" style="left:46px;top:228px;color:#1e1e1e;transform:scaleX(0.92);transform-origin:left">: 1</div>
<div class="t r" style="left:46px;top:228px;width:60px;color:#1e1e1e;transform:scaleX(0.92);transform-origin:right">1 </div>
<div class="t" style="left:106px;top:228px;color:#1e1e1e;transform:scaleX(0.92);transform-origin:left">: 0</div>
<div class="t r" style="left:116px;top:228px;width:60px;color:#1e1e1e;transform:scaleX(0.92);transform-origin:right">15 </div>
<div class="t" style="left:176px;top:228px;color:#1e1e1e;transform:scaleX(0.92);transform-origin:left">: 0</div>
<div class="t r" style="left:213px;top:228px;width:29px;color:#1e1e1e">2</div>
<div class="t r" style="left:243px;top:228px;width:44px;color:#1e1e1e;transform:scaleX(0.91);transform-origin:right">2.20</div>
<div class="t r" style="left:333px;top:228px;width:44px;color:#1e1e1e;transform:scaleX(0.91);transform-origin:right">2.19</div>
<div class="t r" style="left:378px;top:228px;width:44px;color:#1e1e1e;transform:scaleX(0.91);transform-origin:right">2.20</div>
<div class="t r b" style="left:423px;top:228px;width:44px;color:#1e1e1e">2.20</div>
<div class="t r" style="left:468px;top:228px;width:44px;color:#1e1e1e;transform:scaleX(0.91);transform-origin:right">1.66</div>
<div class="t r" style="left:558px;top:228px;width:44px;color:#1e1e1e;transform:scaleX(0.91);transform-origin:right">1.66</div>
<div class="t r" style="left:603px;top:228px;width:44px;color:#1e1e1e;transform:scaleX(0.91);transform-origin:right">1.65</div>
<div class="t r b" style="left:648px;top:228px;width:44px;color:#1e1e1e">1.66</div>
<div class="t r" style="left:693px;top:228px;width:44px;color:#1e1e1e;transform:scaleX(0.91);transform-origin:right">95</div>
<div class="t r" style="left:-14px;top:247px;width:60px;color:#fff;transform:scaleX(0.92);transform-origin:right">1 </div>
<div class="t" style="left:46px;top:247px;color:#fff;transform:scaleX(0.92);transform-origin:left">: 1</div>
<div class="t r" style="left:46px;top:247px;width:60px;color:#fff;transform:scaleX(0.92);transform-origin:right">1 </div>
<div class="t" style="left:106px;top:247px;color:#fff;transform:scaleX(0.92);transform-origin:left">: 0</div>
<div class="t r" style="left:116px;top:247px;width:60px;color:#fff;transform:scaleX(0.92);transform-origin:right">30 </div>
<div class="t" style="left:176px;top:247px;color:#fff;transform:scaleX(0.92);transform-origin:left">: 0</div>
<div class="t r" style="left:213px;top:247px;width:29px;color:#fff">2</div>
<div class="t r" style="left:243px;top:247px;width:44px;color:#fff;transform:scaleX(0.91);transform-origin:right">2.00</div>
<div class="t r" style="left:288px;top:247px;width:44px;color:#fff;transform:scaleX(0.91);transform-origin:right">2.07</div>
<div class="t r" style="left:333px;top:247px;width:44px;color:#fff;transform:scaleX(0.91);transform-origin:right">2.01</div>
<div class="t r" style="left:378px;top:247px;width:44px;color:#fff;transform:scaleX(0.91);transform-origin:right">1.85</div>
<div class="t r b" style="left:423px;top:247px;width:44px;color:#fff">2.07</div>
<div class="t r" style="left:468px;top:247px;width:44px;color:#fff;transform:scaleX(0.91);transform-origin:right">1.80</div>
<div class="t r" style="left:513px;top:247px;width:44px;color:#fff;transform:scaleX(0.91);transform-origin:right">1.80</div>
<div class="t r" style="left:558px;top:247px;width:44px;color:#fff;transform:scaleX(0.91);transform-origin:right">1.78</div>
<div class="t r" style="left:603px;top:247px;width:44px;color:#fff;transform:scaleX(0.91);transform-origin:right">2.00</div>
<div class="t r b" style="left:648px;top:247px;width:44px;color:#fff">2.00</div>
<div class="t r" style="left:693px;top:247px;width:44px;color:#fff;transform:scaleX(0.91);transform-origin:right">102</div>
<div class="t r" style="left:-14px;top:266px;width:60px;color:#1e1e1e;transform:scaleX(0.92);transform-origin:right">1 </div>
<div class="t" style="left:46px;top:266px;color:#1e1e1e;transform:scaleX(0.92);transform-origin:left">: 1</div>
<div class="t r" style="left:46px;top:266px;width:60px;color:#1e1e1e;transform:scaleX(0.92);transform-origin:right">1 </div>
<div class="t" style="left:106px;top:266px;color:#1e1e1e;transform:scaleX(0.92);transform-origin:left">: 0</div>
<div class="t r" style="left:116px;top:266px;width:60px;color:#1e1e1e;transform:scaleX(0.92);transform-origin:right">40 </div>
<div class="t" style="left:176px;top:266px;color:#1e1e1e;transform:scaleX(0.92);transform-origin:left">: 0</div>
<div class="t r" style="left:213px;top:266px;width:29px;color:#1e1e1e">2</div>
<div class="t r" style="left:243px;top:266px;width:44px;color:#1e1e1e;transform:scaleX(0.91);transform-origin:right">1.80</div>
<div class="t r" style="left:288px;top:266px;width:44px;color:#1e1e1e;transform:scaleX(0.91);transform-origin:right">1.88</div>
<div class="t r" style="left:333px;top:266px;width:44px;color:#1e1e1e;transform:scaleX(0.91);transform-origin:right">1.81</div>
<div class="t r" style="left:378px;top:266px;width:44px;color:#1e1e1e;transform:scaleX(0.91);transform-origin:right">1.85</div>
<div class="t r b" style="left:423px;top:266px;width:44px;color:#1e1e1e">1.88</div>
<div class="t r" style="left:468px;top:266px;width:44px;color:#1e1e1e;transform:scaleX(0.91);transform-origin:right">2.00</div>
<div class="t r" style="left:513px;top:266px;width:44px;color:#1e1e1e;transform:scaleX(0.91);transform-origin:right">1.96</div>
<div class="t r" style="left:558px;top:266px;width:44px;color:#1e1e1e;transform:scaleX(0.91);transform-origin:right">1.97</div>
<div class="t r" style="left:603px;top:266px;width:44px;color:#1e1e1e;transform:scaleX(0.91);transform-origin:right">2.00</div>
<div class="t r b" style="left:648px;top:266px;width:44px;color:#1e1e1e">2.00</div>
<div class="t r" style="left:693px;top:266px;width:44px;color:#1e1e1e;transform:scaleX(0.91);transform-origin:right">97</div>
<div class="t r" style="left:-14px;top:285px;width:60px;color:#1e1e1e;transform:scaleX(0.92);transform-origin:right">1 </div>
<div class="t" style="left:46px;top:285px;color:#1e1e1e;transform:scaleX(0.92);transform-origin:left">: 1</div>
<div class="t r" style="left:46px;top:285px;width:60px;color:#1e1e1e;transform:scaleX(0.92);transform-origin:right">1 </div>
<div class="t" style="left:106px;top:285px;color:#1e1e1e;transform:scaleX(0.92);transform-origin:left">: 0</div>
<div class="t r" style="left:116px;top:285px;width:60px;color:#1e1e1e;transform:scaleX(0.92);transform-origin:right">40 </div>
<div class="t" style="left:176px;top:285px;color:#1e1e1e;transform:scaleX(0.92);transform-origin:left">: 15</div>
<div class="t r" style="left:213px;top:285px;width:29px;color:#1e1e1e">2</div>
<div class="t r" style="left:243px;top:285px;width:44px;color:#1e1e1e;transform:scaleX(0.91);transform-origin:right">1.90</div>
<div class="t r" style="left:333px;top:285px;width:44px;color:#1e1e1e;transform:scaleX(0.91);transform-origin:right">1.84</div>
<div class="t r" style="left:378px;top:285px;width:44px;color:#1e1e1e;transform:scaleX(0.91);transform-origin:right">1.65</div>
<div class="t r b" style="left:423px;top:285px;width:44px;color:#1e1e1e">1.90</div>
<div class="t r" style="left:468px;top:285px;width:44px;color:#1e1e1e;transform:scaleX(0.91);transform-origin:right">1.90</div>
<div class="t r" style="left:558px;top:285px;width:44px;color:#1e1e1e;transform:scaleX(0.91);transform-origin:right">1.94</div>
<div class="t r" style="left:603px;top:285px;width:44px;color:#1e1e1e;transform:scaleX(0.91);transform-origin:right">2.20</div>
<div class="t r b" style="left:648px;top:285px;width:44px;color:#1e1e1e">2.20</div>
<div class="t r" style="left:693px;top:285px;width:44px;color:#1e1e1e;transform:scaleX(0.91);transform-origin:right">102</div>
<div class="t r" style="left:-14px;top:304px;width:60px;color:#1e1e1e;transform:scaleX(0.92);transform-origin:right">1 </div>
<div class="t" style="left:46px;top:304px;color:#1e1e1e;transform:scaleX(0.92);transform-origin:left">: 1</div>
<div class="t r" style="left:46px;top:304px;width:60px;color:#1e1e1e;transform:scaleX(0.92);transform-origin:right">2 </div>
<div class="t" style="left:106px;top:304px;color:#1e1e1e;transform:scaleX(0.92);transform-origin:left">: 0</div>
<div class="t r" style="left:116px;top:304px;width:60px;color:#1e1e1e;transform:scaleX(0.92);transform-origin:right">0 </div>
<div class="t" style="left:176px;top:304px;color:#1e1e1e;transform:scaleX(0.92);transform-origin:left">: 0</div>
<div class="t r" style="left:213px;top:304px;width:29px;color:#1e1e1e">1</div>
<div class="t r" style="left:243px;top:304px;width:44px;color:#1e1e1e;transform:scaleX(0.91);transform-origin:right">1.72</div>
<div class="t r" style="left:288px;top:304px;width:44px;color:#1e1e1e;transform:scaleX(0.91);transform-origin:right">1.68</div>
<div class="t r" style="left:333px;top:304px;width:44px;color:#1e1e1e;transform:scaleX(0.91);transform-origin:right">1.67</div>
<div class="t r" style="left:378px;top:304px;width:44px;color:#1e1e1e;transform:scaleX(0.91);transform-origin:right">1.70</div>
<div class="t r b" style="left:423px;top:304px;width:44px;color:#1e1e1e">1.72</div>
<div class="t r" style="left:468px;top:304px;width:44px;color:#1e1e1e;transform:scaleX(0.91);transform-origin:right">2.10</div>
<div class="t r" style="left:513px;top:304px;width:44px;color:#1e1e1e;transform:scaleX(0.91);transform-origin:right">2.20</div>
<div class="t r" style="left:558px;top:304px;width:44px;color:#1e1e1e;transform:scaleX(0.91);transform-origin:right">2.16</div>
<div class="t r" style="left:603px;top:304px;width:44px;color:#1e1e1e;transform:scaleX(0.91);transform-origin:right">2.20</div>
<div class="t r b" style="left:648px;top:304px;width:44px;color:#1e1e1e">2.20</div>
<div class="t r" style="left:693px;top:304px;width:44px;color:#1e1e1e;transform:scaleX(0.91);transform-origin:right">97</div>
<div class="t r" style="left:-14px;top:323px;width:60px;color:#1e1e1e;transform:scaleX(0.92);transform-origin:right">1 </div>
<div class="t" style="left:46px;top:323px;color:#1e1e1e;transform:scaleX(0.92);transform-origin:left">: 1</div>
<div class="t r" style="left:46px;top:323px;width:60px;color:#1e1e1e;transform:scaleX(0.92);transform-origin:right">2 </div>
<div class="t" style="left:106px;top:323px;color:#1e1e1e;transform:scaleX(0.92);transform-origin:left">: 0</div>
<div class="t r" style="left:116px;top:323px;width:60px;color:#1e1e1e;transform:scaleX(0.92);transform-origin:right">15 </div>
<div class="t" style="left:176px;top:323px;color:#1e1e1e;transform:scaleX(0.92);transform-origin:left">: 0</div>
<div class="t r" style="left:213px;top:323px;width:29px;color:#1e1e1e">1</div>
<div class="t r" style="left:243px;top:323px;width:44px;color:#1e1e1e;transform:scaleX(0.91);transform-origin:right">1.61</div>
<div class="t r" style="left:333px;top:323px;width:44px;color:#1e1e1e;transform:scaleX(0.91);transform-origin:right">1.62</div>
<div class="t r" style="left:378px;top:323px;width:44px;color:#1e1e1e;transform:scaleX(0.91);transform-origin:right">1.65</div>
<div class="t r b" style="left:423px;top:323px;width:44px;color:#1e1e1e">1.65</div>
<div class="t r" style="left:468px;top:323px;width:44px;color:#1e1e1e;transform:scaleX(0.91);transform-origin:right">2.30</div>
<div class="t r" style="left:558px;top:323px;width:44px;color:#1e1e1e;transform:scaleX(0.91);transform-origin:right">2.26</div>
<div class="t r" style="left:603px;top:323px;width:44px;color:#1e1e1e;transform:scaleX(0.91);transform-origin:right">2.30</div>
<div class="t r b" style="left:648px;top:323px;width:44px;color:#1e1e1e">2.30</div>
<div class="t r" style="left:693px;top:323px;width:44px;color:#1e1e1e;transform:scaleX(0.91);transform-origin:right">96</div>
<div class="t r" style="left:-14px;top:342px;width:60px;color:#1e1e1e;transform:scaleX(0.92);transform-origin:right">1 </div>
<div class="t" style="left:46px;top:342px;color:#1e1e1e;transform:scaleX(0.92);transform-origin:left">: 1</div>
<div class="t r" style="left:46px;top:342px;width:60px;color:#1e1e1e;transform:scaleX(0.92);transform-origin:right">2 </div>
<div class="t" style="left:106px;top:342px;color:#1e1e1e;transform:scaleX(0.92);transform-origin:left">: 0</div>
<div class="t r" style="left:116px;top:342px;width:60px;color:#1e1e1e;transform:scaleX(0.92);transform-origin:right">30 </div>
<div class="t" style="left:176px;top:342px;color:#1e1e1e;transform:scaleX(0.92);transform-origin:left">: 0</div>
<div class="t r" style="left:213px;top:342px;width:29px;color:#1e1e1e">1</div>
<div class="t r" style="left:333px;top:342px;width:44px;color:#1e1e1e;transform:scaleX(0.91);transform-origin:right">1.59</div>
<div class="t r" style="left:378px;top:342px;width:44px;color:#1e1e1e;transform:scaleX(0.91);transform-origin:right">1.60</div>
<div class="t r b" style="left:423px;top:342px;width:44px;color:#1e1e1e">1.60</div>
<div class="t r" style="left:558px;top:342px;width:44px;color:#1e1e1e;transform:scaleX(0.91);transform-origin:right">2.31</div>
<div class="t r" style="left:603px;top:342px;width:44px;color:#1e1e1e;transform:scaleX(0.91);transform-origin:right">2.35</div>
<div class="t r b" style="left:648px;top:342px;width:44px;color:#1e1e1e">2.35</div>
<div class="t r" style="left:693px;top:342px;width:44px;color:#1e1e1e;transform:scaleX(0.91);transform-origin:right">95</div>
</div>
<div class="ab" style="left:14px;top:380px;width:725px;height:19px;border:1px dotted #f0632a"></div>
<svg class="ab" style="left:6px;top:386px" width="5" height="8"><path d="M0 0L4.5 4L0 8z" fill="#505050"/></svg>
<div class="ab" style="left:1px;top:92px;width:1px;height:395px;background:#d0d0d0"></div>
<div class="ln" style="left:1px;top:486px;width:762px;height:1px"></div>
<div class="ln" style="left:746px;top:92px;width:1px;height:394px"></div>
<div class="ab" style="left:751px;top:269px;width:8px;height:32px;background:#b0b0b0"></div>
<svg class="ab" style="left:751px;top:98px" width="8" height="5"><path d="M0.5 4L4 0.5L7.5 4z" fill="#8a8a8a"/></svg>
<svg class="ab" style="left:751px;top:476px" width="8" height="5"><path d="M0.5 0.5L4 4L7.5 0.5z" fill="#8a8a8a"/></svg>
<div class="ab" style="left:1px;top:487px;width:762px;height:1px;background:#fff"></div>
<div class="cb" style="left:19px;top:494px"><svg class="ab" style="left:0;top:0;overflow:visible" width="11" height="11" viewBox="0 0 11 11"><path d="M1.2 5.4L4.1 8.2L10.2 2.3" stroke="#333" stroke-width="1.3" fill="none"/></svg></div>
<div class="t" style="left:36px;top:491px;color:#000">1</div>
<div class="cb" style="left:88px;top:495px"><svg class="ab" style="left:0;top:0;overflow:visible" width="11" height="11" viewBox="0 0 11 11"><path d="M1.2 5.4L4.1 8.2L10.2 2.3" stroke="#333" stroke-width="1.3" fill="none"/></svg></div>
<div class="t" style="left:105px;top:492px;color:#000">max</div>
<div class="cb" style="left:145px;top:495px"></div>
<div class="t" style="left:162px;top:492px;color:#000">set</div>
<div class="cb" style="left:281px;top:497px"></div>
<div class="t" style="left:298px;top:494px;color:#000;transform:scaleX(0.9);transform-origin:left">serve 1</div>
<div class="cb" style="left:369px;top:497px"></div>
<div class="t" style="left:386px;top:494px;color:#000;transform:scaleX(0.9);transform-origin:left">serve 2</div>
<div class="cb" style="left:19px;top:530px"><svg class="ab" style="left:0;top:0;overflow:visible" width="11" height="11" viewBox="0 0 11 11"><path d="M1.2 5.4L4.1 8.2L10.2 2.3" stroke="#333" stroke-width="1.3" fill="none"/></svg></div>
<div class="t" style="left:36px;top:527px;color:#000">2</div>
<div class="cb" style="left:281px;top:529px"></div>
<div class="t" style="left:298px;top:526px;color:#000">sets diff.</div>
<div class="cb" style="left:419px;top:529px"></div>
<div class="t" style="left:436px;top:526px;color:#000;transform:scaleX(0.93);transform-origin:left">games</div>
<div class="t" style="left:105px;top:526px;color:#000;transform:scaleX(0.97);transform-origin:left">balls per page</div>
<div class="ab" style="left:201px;top:491px;width:57px;height:24px;border:1px solid #7a7a7a;background:#fff"></div>
<div class="t" style="left:205px;top:492px;color:#000">1</div>
<div class="ab" style="left:241px;top:494px;width:13px;height:7px;border:1px solid #b4b4b4;background:#e1e1e1"></div>
<div class="ab" style="left:241px;top:502px;width:13px;height:9px;border:1px solid #b4b4b4;background:#e1e1e1"></div>
<svg class="ab" style="left:243px;top:495px" width="9" height="6"><path d="M0.5 5L4.5 1L8.5 5z" fill="#000"/></svg>
<svg class="ab" style="left:243px;top:504px" width="9" height="6"><path d="M0.5 1L4.5 5L8.5 1z" fill="#000"/></svg>
<div class="ab" style="left:201px;top:524px;width:57px;height:24px;border:1px solid #7a7a7a;background:#fff"></div>
<div class="t" style="left:205px;top:525px;color:#000">10</div>
<div class="ab" style="left:241px;top:527px;width:13px;height:7px;border:1px solid #b4b4b4;background:#e1e1e1"></div>
<div class="ab" style="left:241px;top:535px;width:13px;height:9px;border:1px solid #b4b4b4;background:#e1e1e1"></div>
<svg class="ab" style="left:243px;top:528px" width="9" height="6"><path d="M0.5 5L4.5 1L8.5 5z" fill="#000"/></svg>
<svg class="ab" style="left:243px;top:537px" width="9" height="6"><path d="M0.5 1L4.5 5L8.5 1z" fill="#000"/></svg>
<div class="ab" style="left:369px;top:522px;width:40px;height:24px;border:1px solid #7a7a7a;background:#fff"></div>
<div class="t" style="left:373px;top:523px;color:#000">0</div>
<div class="ab" style="left:392px;top:525px;width:13px;height:7px;border:1px solid #b4b4b4;background:#e1e1e1"></div>
<div class="ab" style="left:392px;top:533px;width:13px;height:9px;border:1px solid #b4b4b4;background:#e1e1e1"></div>
<svg class="ab" style="left:394px;top:526px" width="9" height="6"><path d="M0.5 5L4.5 1L8.5 5z" fill="#000"/></svg>
<svg class="ab" style="left:394px;top:535px" width="9" height="6"><path d="M0.5 1L4.5 5L8.5 1z" fill="#000"/></svg>
<div class="ab" style="left:475px;top:522px;width:40px;height:24px;border:1px solid #7a7a7a;background:#fff"></div>
<div class="t" style="left:479px;top:523px;color:#000">0</div>
<div class="ab" style="left:498px;top:525px;width:13px;height:7px;border:1px solid #b4b4b4;background:#e1e1e1"></div>
<div class="ab" style="left:498px;top:533px;width:13px;height:9px;border:1px solid #b4b4b4;background:#e1e1e1"></div>
<svg class="ab" style="left:500px;top:526px" width="9" height="6"><path d="M0.5 5L4.5 1L8.5 5z" fill="#000"/></svg>
<svg class="ab" style="left:500px;top:535px" width="9" height="6"><path d="M0.5 1L4.5 5L8.5 1z" fill="#000"/></svg>
<div class="ab" style="left:530px;top:491px;width:217px;height:58px;border:1px solid #828790;background:#fff"></div>
<div class="cb2" style="left:537px;top:495px"><svg class="ab" style="left:0;top:0;overflow:visible" width="9" height="9" viewBox="0 0 9 9"><path d="M0.2 4.0L3.2 7.2L9.2 1.2" stroke="#333" stroke-width="1.3" fill="none"/></svg></div>
<div class="cb2" style="left:537px;top:510px"><svg class="ab" style="left:0;top:0;overflow:visible" width="9" height="9" viewBox="0 0 9 9"><path d="M0.2 4.0L3.2 7.2L9.2 1.2" stroke="#333" stroke-width="1.3" fill="none"/></svg></div>
<div class="cb2" style="left:537px;top:525px"></div>
<div class="cb2" style="left:643px;top:495px"><svg class="ab" style="left:0;top:0;overflow:visible" width="9" height="9" viewBox="0 0 9 9"><path d="M0.2 4.0L3.2 7.2L9.2 1.2" stroke="#333" stroke-width="1.3" fill="none"/></svg></div>
<div class="cb2" style="left:643px;top:510px"><svg class="ab" style="left:0;top:0;overflow:visible" width="9" height="9" viewBox="0 0 9 9"><path d="M0.2 4.0L3.2 7.2L9.2 1.2" stroke="#333" stroke-width="1.3" fill="none"/></svg></div>
<div class="ab" style="left:553px;top:523px;width:85px;height:15px;background:#0078d7"></div>
<div class="t" style="left:555px;top:491px;color:#000">bet365</div>
<div class="t" style="left:555px;top:506px;color:#000">Tipsport</div>
<div class="t" style="left:555px;top:521px;color:#fff">SynotTip</div>
<div class="t" style="left:661px;top:491px;color:#000">Tipos</div>
<div class="t" style="left:661px;top:506px;color:#000;transform:scaleX(0.8);transform-origin:left">STS</div>
</body></html>
